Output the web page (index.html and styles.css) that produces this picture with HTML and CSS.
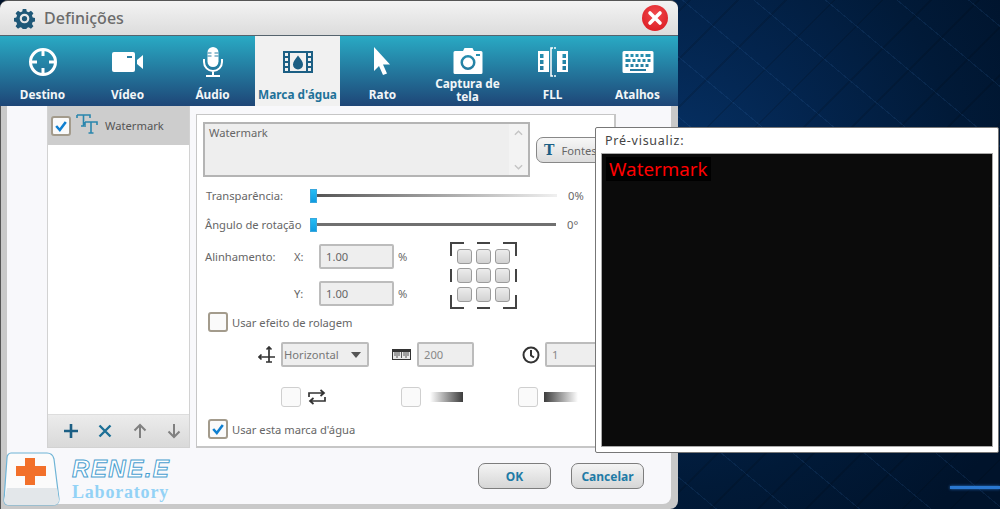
FILE: index.html
```html
<!DOCTYPE html>
<html lang="pt">
<head>
<meta charset="UTF-8">
<title>Definições</title>
<link rel="stylesheet" href="styles.css">
</head>
<body>
<div class="desktop">
<div class="glow-line"></div>

<div class="window">
  <div class="titlebar">
    <svg class="gear" viewBox="0 0 24 24"><path fill="#1f5878" fill-rule="evenodd" d="M10 1h4l.6 3 2.2.9 2.6-1.7 2.8 2.8-1.7 2.6.9 2.2 3 .6v4l-3 .6-.9 2.2 1.7 2.6-2.8 2.8-2.6-1.7-2.2.9-.6 3h-4l-.6-3-2.2-.9-2.6 1.7-2.8-2.8 1.7-2.6-.9-2.2-3-.6v-4l3-.6.9-2.2-1.7-2.6 2.8-2.8 2.6 1.7 2.2-.9zM12 6.500a5.500 5.500 0 1 0 0 11 5.500 5.500 0 0 0 0-11zM12 9a3 3 0 1 1 0 6 3 3 0 0 1 0-6z"/></svg>
    <span class="title">Definições</span>
    <div class="close"><svg viewBox="0 0 26 26"><path d="M8 8l10 10M18 8L8 18" stroke="#fff" stroke-width="3.600" stroke-linecap="round"/></svg></div>
  </div>

  <div class="tabs">
    <div class="tab">
      <svg viewBox="0 0 32 32"><circle cx="16" cy="16" r="12.500" fill="none" stroke="#fff" stroke-width="3"/><path d="M16 4v6M16 22v6M4 16h6M22 16h6" stroke="#fff" stroke-width="3"/></svg>
      <span class="tab-label">Destino</span>
    </div>
    <div class="tab">
      <svg viewBox="0 0 32 32"><rect x="0" y="6" width="23" height="20" rx="2" fill="#fff"/><path d="M25 14l6-5v14l-6-5z" fill="#fff"/><rect x="15" y="10" width="5" height="2" fill="#2a7ea3"/></svg>
      <span class="tab-label">Vídeo</span>
    </div>
    <div class="tab">
      <svg viewBox="0 0 32 32"><rect x="10.500" y="1" width="11" height="20" rx="5.500" fill="#fff"/><path d="M10.500 7h4M10.500 10h4M17.500 7h4M17.500 10h4" stroke="#2a7ea3"/><path d="M7 13v3a9 9 0 0 0 18 0v-3M16 25v4M9 30h14" fill="none" stroke="#fff" stroke-width="2"/></svg>
      <span class="tab-label">Áudio</span>
    </div>
    <div class="tab tab-active">
      <svg viewBox="0 0 32 32"><path fill="#1c5f84" fill-rule="evenodd" d="M1 5h30v22H1zM3 7v3h3V7zm0 5v3h3v-3zm0 5v3h3v-3zm0 5v3h3v-3zM26 7v3h3V7zm0 5v3h3v-3zm0 5v3h3v-3zm0 5v3h3v-3zM8 7v18h16V7z"/><path fill="#1c5f84" d="M16 9.500c3 4 5 6.500 5 9a5 5 0 0 1-10 0c0-2.500 2-5 5-9z"/></svg>
      <span class="tab-label">Marca d'água</span>
    </div>
    <div class="tab">
      <svg viewBox="0 0 32 32"><path fill="#fff" d="M7 1v24l5-5 4 9 4-1.500-4-9h7z"/></svg>
      <span class="tab-label">Rato</span>
    </div>
    <div class="tab">
      <svg viewBox="0 0 32 32"><path fill="#fff" fill-rule="evenodd" d="M11 5l1.500-3h8L22 5h7a1.500 1.500 0 0 1 1.500 1.500v20A1.500 1.500 0 0 1 29 28H3a1.500 1.500 0 0 1-1.500-1.500v-20A1.500 1.500 0 0 1 3 5zM16 9a7.500 7.500 0 1 0 0 15 7.500 7.500 0 0 0 0-15zm0 2.500a5 5 0 1 1 0 10 5 5 0 0 1 0-10zM24 8v2h4V8z"/></svg>
      <span class="tab-label tab-label-wrap">Captura de tela</span>
    </div>
    <div class="tab">
      <svg viewBox="0 0 32 32"><path fill="#fff" fill-rule="evenodd" d="M1 5h11v21H1zM3 8v4h3.500V8zm0 6v4h3.500v-4zm0 6v4h3.500v-4zM20 5h11v21H20zM25.500 8v4H29V8zm0 6v4H29v-4zm0 6v4H29v-4z"/><path d="M16 2h-2v28h2M17 2h2M17 30h2" stroke="#fff" stroke-width="1.500" fill="none"/></svg>
      <span class="tab-label">FLL</span>
    </div>
    <div class="tab">
      <svg viewBox="0 0 32 32"><path fill="#fff" fill-rule="evenodd" d="M2 5h28a1.500 1.500 0 0 1 1.500 1.500v19A1.500 1.500 0 0 1 30 27H2a1.500 1.500 0 0 1-1.500-1.500v-19A1.500 1.500 0 0 1 2 5zm1.500 3v3h3V8zm5 0v3h3V8zm5 0v3h3V8zm5 0v3h3V8zm5 0v3h5V8zm-20 5v3h5v-3zm7 0v3h3v-3zm5 0v3h3v-3zm5 0v3h3v-3zm5 0v3h3v-3zm-22 5v3h3v-3zm5 0v3h3v-3zm5 0v3h3v-3zm5 0v3h3v-3zm5 0v3h3v-3zM8 23v2h16v-2z"/></svg>
      <span class="tab-label">Atalhos</span>
    </div>
  </div>

  <div class="content">
    <div class="sidebar">
      <div class="wm-item">
        <div class="check check-on"><svg viewBox="0 0 20 20"><path d="M4 10l4.500 5L16 5" fill="none" stroke="#0f7fd0" stroke-width="3.200"/></svg></div>
        <svg class="tt" viewBox="0 0 22 22"><path d="M1 2h13v3M1 2v3M7.500 2v11M5 13h5M9 9h12v3M9 9v3M15 9v11M12.500 20h5" fill="none" stroke="#2a86ad" stroke-width="1.600"/></svg>
        <span>Watermark</span>
      </div>
      <div class="wm-list"></div>
      <div class="wm-tools">
        <svg viewBox="0 0 18 18"><path d="M9 2v14M2 9h14" stroke="#1c5f84" stroke-width="2.600"/></svg>
        <svg viewBox="0 0 18 18"><path d="M3.500 3.500l11 11M14.500 3.500l-11 11" stroke="#1c6f96" stroke-width="2.400"/></svg>
        <svg viewBox="0 0 18 18"><path d="M9 16V3M3.500 8.500L9 3l5.500 5.500" fill="none" stroke="#808080" stroke-width="2"/></svg>
        <svg viewBox="0 0 18 18"><path d="M9 2v13M3.500 9.500L9 15l5.500-5.500" fill="none" stroke="#808080" stroke-width="2"/></svg>
      </div>
    </div>

    <div class="panel">
      <div class="text-row">
        <div class="text-box">
          <span>Watermark</span>
          <div class="scroll">
            <svg viewBox="0 0 10 6"><path d="M1 5l4-4 4 4" fill="none" stroke="#c4c4c4" stroke-width="1.500"/></svg>
            <svg viewBox="0 0 10 6"><path d="M1 1l4 4 4-4" fill="none" stroke="#c4c4c4" stroke-width="1.500"/></svg>
          </div>
        </div>
        <div class="font-btn"><span class="font-t">T</span>Fontes</div>
      </div>

      <div class="slider-row">
        <span class="slider-label">Transparência:</span>
        <div class="handle"></div>
        <div class="track track-fade"></div>
        <span class="slider-val">0%</span>
      </div>
      <div class="slider-row">
        <span class="slider-label">Ângulo de rotação</span>
        <div class="handle"></div>
        <div class="track"></div>
        <span class="slider-val">0°</span>
      </div>

      <div class="align">
        <div class="align-fields">
          <div class="align-row">
            <span class="align-label">Alinhamento:</span>
            <span class="axis">X:</span>
            <div class="field field-xy">1.00</div>
            <span class="pct">%</span>
          </div>
          <div class="align-row">
            <span class="align-label"></span>
            <span class="axis">Y:</span>
            <div class="field field-xy">1.00</div>
            <span class="pct">%</span>
          </div>
        </div>
        <div class="pos-grid">
          <svg class="pos-frame" viewBox="0 0 67 67"><path d="M1 14V1h13M27 1h13M53 1h13v13M66 27v13M66 53v13H53M40 66H27M14 66H1V53M1 40V27" fill="none" stroke="#444" stroke-width="2"/></svg>
          <div class="pos-btn"></div><div class="pos-btn"></div><div class="pos-btn"></div>
          <div class="pos-btn"></div><div class="pos-btn"></div><div class="pos-btn"></div>
          <div class="pos-btn"></div><div class="pos-btn"></div><div class="pos-btn"></div>
        </div>
      </div>

      <div class="check-row check-row-scroll">
        <div class="check"></div>
        <span>Usar efeito de rolagem</span>
      </div>

      <div class="scroll-opts">
        <svg class="ico-move" viewBox="0 0 18 18"><path d="M11 1v15M8 16h6M8.500 3.500L11 1l2.500 2.500M1 11h16M3.500 8.500L1 11l2.500 2.500" fill="none" stroke="#333" stroke-width="1.700"/></svg>
        <div class="field select">Horizontal<i class="caret"></i></div>
        <svg class="ico-ruler" viewBox="0 0 19 11"><rect x="0.500" y="0.500" width="18" height="10" fill="#e8e8e8" stroke="#333"/><rect x="0" y="0" width="19" height="3" fill="#333"/><path d="M3 3v4M5 3v6M7 3v4M9.500 3v6M12 3v4M14 3v6M16 3v4" stroke="#333" stroke-width="0.800"/></svg>
        <div class="field field-len">200</div>
        <svg class="ico-clock" viewBox="0 0 18 18"><circle cx="9" cy="9" r="7.500" fill="none" stroke="#333" stroke-width="2"/><path d="M9 4v5.500l3 2" fill="none" stroke="#333" stroke-width="2"/></svg>
        <div class="field field-time">1</div>
      </div>

      <div class="fx-row">
        <div class="check check-light fx-a"></div>
        <svg class="ico-loop" viewBox="0 0 18 16"><path d="M1 8V4h14M12.500 1L16 4l-3.500 3M17 8v4H3M5.500 9L2 12l3.500 3" fill="none" stroke="#333" stroke-width="1.700"/></svg>
        <div class="check check-light fx-b"></div>
        <div class="fade fade-in"></div>
        <div class="check check-light fx-c"></div>
        <div class="fade fade-out"></div>
      </div>

      <div class="check-row check-row-use">
        <div class="check check-on"><svg viewBox="0 0 20 20"><path d="M4 10l4.500 5L16 5" fill="none" stroke="#0f7fd0" stroke-width="3.200"/></svg></div>
        <span>Usar esta marca d'água</span>
      </div>
    </div>
  </div>

  <div class="footer">
    <div class="btn">OK</div>
    <div class="btn">Cancelar</div>
  </div>
</div>

<div class="logo">
  <svg class="keycap" viewBox="0 0 58 54"><path d="M8 1h36c4 0 6 2 7 6l5 40c0 4-2 6-6 6H6c-3 0-5-2-5-5L4 6c0-3 2-5 4-5z" fill="#fbfbfb" stroke="#6fb4d6" stroke-width="1.200"/><path d="M4 36h50l2 12c0 3-2 5-6 5H6c-3 0-5-2-5-5z" fill="#e3e7ea"/><path d="M22 6h10v8h11v10H32v9H22v-9H13V14h9z" fill="#f2702a"/></svg>
  <div class="logo-text">
    <div class="logo-name">RENE.E</div>
    <div class="logo-lab">Laboratory</div>
  </div>
</div>

<div class="preview">
  <div class="preview-title">Pré-visualiz:</div>
  <div class="preview-screen"><span class="preview-mark">Watermark</span></div>
</div>
</div>
</body>
</html>
```
FILE: styles.css
```css
* {
box-sizing: border-box;
}
body {
margin: 0;
font-family: "Noto Sans", sans-serif;
font-size: 11.2px;
color: #666;
overflow: hidden;
}
.desktop {
position: relative;
width: 1000px;
height: 509px;
overflow: hidden;
background:
  repeating-linear-gradient(40deg, rgba(60,120,190,0.13) 0, rgba(60,120,190,0.13) 1px, transparent 1px, transparent 46px),
  repeating-linear-gradient(-45deg, rgba(0,0,0,0.12) 0, rgba(0,0,0,0.12) 2px, transparent 2px, transparent 34px),
  radial-gradient(circle at 660px 190px, #07346a 0, #03244d 170px, #011a38 300px, #00132b 420px);
}
.glow-line {
position: absolute;
left: 950px;
top: 486px;
width: 50px;
height: 3px;
background: #2a78d0;
box-shadow: 0 0 3px #2a78d0;
}

/* main window */
.window {
position: absolute;
left: 0;
top: 0;
width: 678px;
height: 509px;
display: flex;
flex-direction: column;
background: #c9c9c9;
box-shadow: inset 1px 0 #555;
border-radius: 8px 8px 8px 0;
border-top: 1px solid #555;
padding-bottom: 5px;
overflow: hidden;
}
.titlebar {
height: 35px;
flex: none;
display: flex;
align-items: center;
padding-left: 14px;
background: linear-gradient(#f3f3f3, #dcdcdc);
border-bottom: 1px solid #55636d;
}
.gear {
width: 21px;
height: 21px;
}
.title {
margin-left: 9px;
font-size: 16px;
font-weight: 500;
color: #6b6b6b;
}
.close {
margin-left: auto;
margin-right: 10px;
width: 26px;
height: 26px;
border-radius: 50%;
background: radial-gradient(circle at 50% 35%, #f0494c, #d9141c);
}
.close svg {
display: block;
width: 26px;
height: 26px;
}
.tabs {
height: 70px;
flex: none;
display: flex;
background: linear-gradient(#29aac4, #1e4677);
}
.tab {
width: 85px;
flex: none;
display: flex;
flex-direction: column;
align-items: center;
padding-top: 10px;
color: #f2f6f8;
font-weight: 700;
font-size: 11.8px;
}
.tab svg {
width: 32px;
height: 32px;
flex: none;
}
.tab-label {
margin-top: 10px;
line-height: 13px;
text-align: center;
white-space: nowrap;
}
.tab-label-wrap {
margin-top: -1px;
white-space: normal;
width: 76px;
}
.tab-active {
background: #f1f1f1;
color: #1f7199;
}
.content {
flex: 1;
display: flex;
margin: 0 7px;
padding-left: 40px;
background: #f8f8fb;
min-height: 0;
}

/* watermark list */
.sidebar {
width: 143px;
display: flex;
flex-direction: column;
background: #fff;
border: 1px solid #d2d2d2;
border-top: none;
}
.wm-item {
height: 39px;
flex: none;
display: flex;
align-items: center;
background: #cdcdcd;
padding-left: 3px;
color: #555;
}
.wm-item .tt {
width: 22px;
height: 22px;
margin-left: 5px;
margin-top: -4px;
}
.wm-item span {
margin-left: 7px;
}
.wm-list {
flex: 1;
}
.wm-tools {
height: 33px;
flex: none;
display: flex;
align-items: center;
justify-content: space-between;
padding: 0 6px 0 14px;
background: linear-gradient(#ececec, #d9d9d9);
border-top: 1px solid #ddd;
}
.wm-tools svg {
width: 18px;
height: 18px;
}

/* settings panel */
.panel {
width: 420px;
margin: 8px 0 0 6px;
padding: 7px 0 0 6px;
background: #fff;
border: 1px solid #c6c6c6;
border-width: 1px 2px 2px 1px;
}
.text-row {
display: flex;
align-items: flex-start;
}
.text-box {
width: 327px;
height: 55px;
flex: none;
display: flex;
justify-content: space-between;
background: #eee;
border: 2px solid #b4b4b4;
padding-left: 4px;
line-height: 15px;
color: #666;
}
.text-box span {
padding-top: 1px;
}
.scroll {
width: 19px;
display: flex;
flex-direction: column;
justify-content: space-between;
align-items: center;
background: #f3f3f3;
padding: 6px 0 5px;
}
.scroll svg {
width: 9px;
height: 6px;
}
.font-btn {
width: 80px;
height: 26px;
flex: none;
margin: 15px 0 0 6px;
display: flex;
align-items: center;
padding-left: 7px;
border: 1px solid #888;
border-radius: 7px;
background: linear-gradient(#f7f7f7, #dcdcdc);
}
.font-t {
font-family: "DejaVu Serif", serif;
font-weight: 700;
font-size: 14px;
color: #1c5f84;
margin-right: 7px;
}
.slider-row {
height: 29px;
display: flex;
align-items: center;
color: #666;
}
.text-row + .slider-row {
margin-top: 4px;
}
.slider-label {
width: 107px;
flex: none;
padding-left: 3px;
white-space: nowrap;
}
.slider-row + .slider-row .slider-label {
padding-left: 2px;
}
.handle {
width: 7px;
height: 14px;
flex: none;
background: linear-gradient(#25bdf4, #0f9be0);
border: 1px solid #3aa7dd;
}
.track {
width: 239px;
height: 3px;
flex: none;
background: #707070;
}
.track-fade {
width: 240px;
background: linear-gradient(to right, #555, #f0f0f0);
}
.slider-val {
margin-left: 11px;
}
.align {
margin-top: 5px;
display: flex;
align-items: flex-start;
}
.align-row {
display: flex;
align-items: center;
height: 25px;
}
.align-row + .align-row {
margin-top: 12px;
}
.align-label {
width: 91px;
flex: none;
padding-left: 2px;
}
.axis {
width: 25px;
flex: none;
}
.pct {
margin-left: 4px;
}
.field {
height: 25px;
background: #eee;
border: 2px solid #bcbcbc;
border-radius: 2px;
display: flex;
align-items: center;
padding-left: 5px;
flex: none;
color: #666;
}
.field-xy {
width: 75px;
}
.pos-grid {
position: relative;
width: 67px;
height: 67px;
margin: -2px 0 -3px 43px;
padding: 7px;
display: grid;
grid-template-columns: repeat(3, 15px);
grid-auto-rows: 15px;
gap: 4px;
}
.pos-frame {
position: absolute;
left: 0;
top: 0;
width: 67px;
height: 67px;
}
.pos-btn {
background: linear-gradient(#ececec, #d2d2d2);
border: 1px solid #9b9b9b;
border-radius: 3px;
}
.check {
width: 20px;
height: 20px;
flex: none;
background: #fafafa;
border: 2px solid #a39b8c;
border-radius: 3px;
}
.check svg {
display: block;
width: 16px;
height: 16px;
}
.check-light {
border: 1px solid #cfcfcf;
}
.check-row {
display: flex;
align-items: center;
padding-left: 5px;
}
.check-row span {
margin-left: 4px;
}
.check-row-scroll {
margin-top: 6px;
}
.check-row-use {
margin-top: 12px;
}
.scroll-opts {
margin-top: 10px;
height: 25px;
display: flex;
align-items: center;
padding-left: 55px;
}
.ico-move {
width: 18px;
height: 18px;
flex: none;
}
.select {
width: 88px;
margin-left: 5px;
padding-left: 1px;
color: #777;
position: relative;
}
.caret {
position: absolute;
right: 6px;
top: 8px;
border: 5px solid transparent;
border-top: 6px solid #555;
border-bottom: none;
}
.ico-ruler {
width: 19px;
height: 11px;
margin-left: 23px;
flex: none;
}
.field-len {
width: 57px;
margin-left: 6px;
color: #888;
}
.ico-clock {
width: 18px;
height: 18px;
margin-left: 48px;
flex: none;
}
.field-time {
width: 60px;
margin-left: 5px;
color: #888;
}
.fx-row {
margin-top: 20px;
height: 20px;
display: flex;
align-items: center;
padding-left: 78px;
}
.ico-loop {
width: 18px;
height: 16px;
margin-left: 7px;
flex: none;
}
.fx-b {
margin-left: 75px;
}
.fade {
width: 33px;
height: 10px;
margin-left: 9px;
flex: none;
}
.fade-in {
background: linear-gradient(to right, #fff, #3c3c3c);
}
.fx-c {
margin-left: 55px;
}
.fade-out {
width: 34px;
margin-left: 6px;
background: linear-gradient(to right, #3c3c3c, #fff);
}
.footer {
height: 56px;
flex: none;
margin: 0 7px;
display: flex;
justify-content: flex-end;
align-items: flex-start;
gap: 20px;
padding: 15px 27px 0 0;
background: #f8f8fb;
border-radius: 0 0 8px 0;
}
.btn {
width: 73px;
height: 26px;
display: flex;
align-items: center;
justify-content: center;
border: 1px solid #7d7d7d;
border-radius: 7px;
background: linear-gradient(#f4f4f4, #d6d6d6);
color: #1f7ba6;
font-weight: 700;
font-size: 12px;
}

/* logo over the corner of the window */
.logo {
position: absolute;
left: 3px;
top: 452px;
display: flex;
}
.keycap {
width: 58px;
height: 54px;
flex: none;
}
.logo-text {
margin-left: 11px;
}
.logo-name {
font-family: "Liberation Sans", sans-serif;
font-style: italic;
font-weight: 700;
font-size: 24px;
line-height: 27px;
letter-spacing: 1.500px;
margin-top: 3px;
color: #fff;
-webkit-text-stroke: 1px #4a9fd0;
}
.logo-lab {
font-family: "Liberation Serif", serif;
font-weight: 700;
font-size: 18px;
line-height: 20px;
letter-spacing: 0.800px;
color: #93d2f6;
}

/* preview window */
.preview {
position: absolute;
left: 595px;
top: 127px;
width: 404px;
height: 326px;
display: flex;
flex-direction: column;
background: #fff;
border: 1px solid #777;
border-radius: 2px;
padding: 0 5px 5px;
}
.preview-title {
height: 25px;
flex: none;
display: flex;
align-items: center;
padding-left: 4px;
font-size: 12.500px;
letter-spacing: 0.750px;
color: #444;
}
.preview-screen {
flex: 1;
background: #0b0b0b;
border: 1px solid #aaa;
padding: 3px 0 0 4px;
}
.preview-mark {
display: inline-block;
background: #000;
padding: 0 3px;
font-size: 18.800px;
line-height: 24px;
color: #f00;
}
```
